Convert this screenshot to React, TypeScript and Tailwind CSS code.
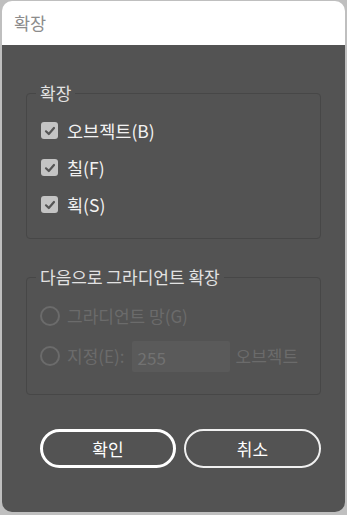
import React from 'react';

const font = { fontFamily: '"Noto Sans CJK KR", "Noto Sans", sans-serif' };

function Check({ label }: { label: string }) {
  return (
    <div className="flex h-[37px] items-center gap-[9px]">
      <span className="flex h-[17px] w-[17px] items-center justify-center rounded-[3px] bg-[#c4c4c4]">
        <svg width="12" height="12" viewBox="0 0 12 12">
          <polyline points="2,6.3 4.8,9 10,3" fill="none" stroke="#555" strokeWidth="2.2" strokeLinecap="round" strokeLinejoin="round" />
        </svg>
      </span>
      <span className="text-[17.5px] leading-none text-[#f2f2f2]">{label}</span>
    </div>
  );
}

function Radio() {
  return <span className="h-[20px] w-[20px] shrink-0 rounded-full border-2 border-[#6b6b6b]" />;
}

function Group({ title, children, className }: { title: string; children: React.ReactNode; className?: string }) {
  return (
    <div className={`relative rounded-[4px] border border-[#474747] ${className ?? ''}`}>
      <span className="absolute -top-[13px] left-[9px] bg-[#535353] px-[4px] text-[17px] leading-[24px] text-[#e2e2e2]">
        {title}
      </span>
      {children}
    </div>
  );
}

export default function App() {
  return (
    <div className="h-[515px] w-[347px] bg-[#bfbfbf] pt-[1px]" style={font}>
      <div className="mx-[2px] flex h-[511px] flex-col overflow-hidden rounded-[10px]">
        {/* title bar */}
        <div className="flex h-[44px] items-center bg-white pl-[12px] text-[17.5px] text-[#8c8c8c]">확장</div>

        <div className="flex flex-1 flex-col bg-[#535353] px-[24px]">
          <Group title="확장" className="mt-[48px] h-[146px] pl-[14px] pt-[18px]">
            <Check label="오브젝트(B)" />
            <Check label="칠(F)" />
            <Check label="획(S)" />
          </Group>

          <Group title="다음으로 그라디언트 확장" className="mt-[38px] h-[118px] pl-[13px] pt-[18px]">
            <div className="flex h-[40px] items-center gap-[7px]">
              <Radio />
              <span className="text-[17px] text-[#6b6b6b]">그라디언트 망(G)</span>
            </div>
            <div className="flex h-[40px] items-center gap-[7px]">
              <Radio />
              <span className="text-[17px] text-[#6b6b6b]">지정(E):</span>
              <div className="flex h-[31px] w-[98px] items-end rounded-[2px] bg-[#5a5a5a] pb-[2px] pl-[6px] text-[17px] leading-[24px] text-[#727272]">
                255
              </div>
              <span className="-ml-[1px] text-[17px] text-[#6b6b6b]">오브젝트</span>
            </div>
          </Group>

          <div className="ml-[14px] mt-[34px] flex gap-[8px]">
            <button className="flex h-[39px] w-[137px] items-center justify-center rounded-full border-[3px] border-white text-[17px] text-white">
              확인
            </button>
            <button className="flex h-[39px] w-[138px] items-center justify-center rounded-full border-2 border-[#f0f0f0] text-[17px] text-white">
              취소
            </button>
          </div>
        </div>
      </div>
    </div>
  );
}
